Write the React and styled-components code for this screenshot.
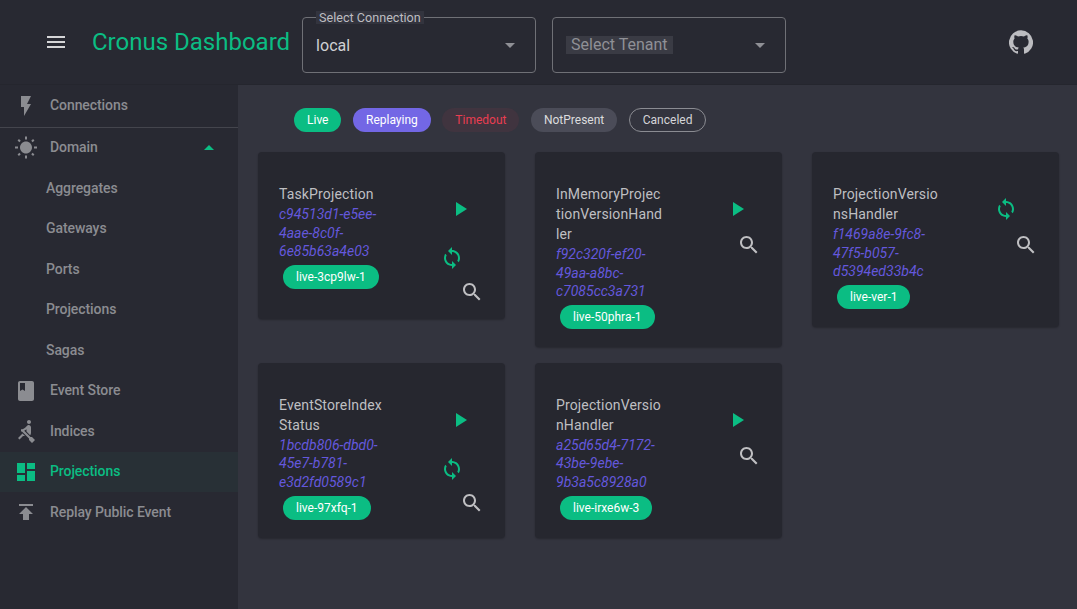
import React from 'react';
import styled, { createGlobalStyle } from 'styled-components';

const paths = {
    menu: 'M3 18h18v-2H3v2zm0-5h18v-2H3v2zm0-7v2h18V6H3z',
    flash: 'M7 2v11h3v9l7-12h-4l4-8z',
    sun: 'M6.76 4.84l-1.8-1.79-1.41 1.41 1.79 1.79 1.42-1.41zM4 10.5H1v2h3v-2zm9-9.95h-2V3.5h2V.55zm7.45 3.91l-1.41-1.41-1.79 1.79 1.41 1.41 1.79-1.79zm-3.21 13.7l1.79 1.8 1.41-1.41-1.8-1.79-1.4 1.4zM20 10.5v2h3v-2h-3zm-8-5c-3.31 0-6 2.69-6 6s2.69 6 6 6 6-2.69 6-6-2.69-6-6-6zm-1 16.95h2V19.5h-2v2.95zm-7.45-3.91l1.41 1.41 1.79-1.8-1.41-1.41-1.79 1.8z',
    book: 'M18 2H6c-1.1 0-2 .9-2 2v16c0 1.1.9 2 2 2h12c1.1 0 2-.9 2-2V4c0-1.1-.9-2-2-2zM6 4h5v8l-2.5-1.5L6 12V4z',
    rowing: 'M8.5 14.5L4 19l1.5 1.5L9 17h2l-2.5-2.5zM15 1c-1.1 0-2 .9-2 2s.9 2 2 2 2-.9 2-2-.9-2-2-2zm6 20.01L18 24l-2.99-3.01V19.5l-7.1-7.09c-.31.05-.61.07-.91.07v-2.16c1.66.03 3.61-.87 4.67-2.04l1.4-1.55c.19-.21.43-.38.69-.5.29-.14.62-.23.96-.23h.03C15.99 6.01 17 7.02 17 8.26v5.75c0 .84-.35 1.61-.92 2.16l-3.58-3.58v-2.27c-.63.52-1.43 1.02-2.3 1.39L16.5 18H18l3 3.01z',
    dashboard: 'M3 13h8V3H3v10zm0 8h8v-6H3v6zm10 0h8V11h-8v10zm0-18v6h8V3h-8z',
    publish: 'M5 4v2h14V4H5zm0 10h4v6h6v-6h4l-7-7-7 7z',
    play: 'M8 5v14l11-7z',
    sync: 'M12 4V1L8 5l4 4V6c3.31 0 6 2.69 6 6 0 1.01-.25 1.97-.7 2.8l1.46 1.46C19.54 15.03 20 13.57 20 12c0-4.42-3.58-8-8-8zm0 14c-3.31 0-6-2.69-6-6 0-1.01.25-1.97.7-2.8L5.24 7.74C4.46 8.97 4 10.43 4 12c0 4.42 3.58 8 8 8v3l4-4-4-4v3z',
    search: 'M15.5 14h-.79l-.28-.27C15.41 12.59 16 11.11 16 9.5 16 5.91 13.09 3 9.5 3S3 5.91 3 9.5 5.91 16 9.5 16c1.61 0 3.09-.59 4.23-1.57l.27.28v.79l5 4.99L20.49 19l-4.99-5zm-6 0C7.01 14 5 11.99 5 9.5S7.01 5 9.5 5 14 7.01 14 9.5 11.99 14 9.5 14z',
    dropDown: 'M7 10l5 5 5-5z',
    dropUp: 'M7 14l5-5 5 5z',
    github: 'M12 .3a12 12 0 0 0-3.8 23.4c.6.1.8-.3.8-.6v-2c-3.3.7-4-1.6-4-1.6-.6-1.4-1.4-1.8-1.4-1.8-1-.7.1-.7.1-.7 1.2 0 1.9 1.2 1.9 1.2 1 1.8 2.8 1.3 3.5 1 0-.8.4-1.3.7-1.6-2.7-.3-5.5-1.3-5.5-6 0-1.2.5-2.3 1.3-3.1-.2-.4-.6-1.6 0-3.2 0 0 1-.3 3.4 1.2a11.5 11.5 0 0 1 6 0c2.3-1.5 3.3-1.2 3.3-1.2.6 1.6.2 2.8 0 3.2.9.8 1.3 1.9 1.3 3.2 0 4.6-2.8 5.6-5.5 5.9.5.4.9 1 .9 2.2v3.3c0 .3.1.7.8.6A12 12 0 0 0 12 .3',
};

const Icon = ({ name, size = 24, color = 'currentColor' }) => (
    <svg width={size} height={size} viewBox="0 0 24 24" fill={color} style={{ display: 'block', flexShrink: 0 }}>
        <path d={paths[name]} />
    </svg>
);

const navTop = [{ icon: 'flash', label: 'Connections' }];
const domainItems = ['Aggregates', 'Gateways', 'Ports', 'Projections', 'Sagas'];
const navBottom = [
    { icon: 'book', label: 'Event Store' },
    { icon: 'rowing', label: 'Indices' },
    { icon: 'dashboard', label: 'Projections', active: true },
    { icon: 'publish', label: 'Replay Public Event' },
];

const statuses = [
    { label: 'Live', kind: 'live' },
    { label: 'Replaying', kind: 'replaying' },
    { label: 'Timedout', kind: 'timedout' },
    { label: 'NotPresent', kind: 'notPresent' },
    { label: 'Canceled', kind: 'canceled' },
];

const cards = [
    { name: 'TaskProjection', id: 'c94513d1-e5ee-4aae-8c0f-6e85b63a4e03', chip: 'live-3cp9lw-1', play: true, sync: true },
    { name: 'InMemoryProjectionVersionHandler', id: 'f92c320f-ef20-49aa-a8bc-c7085cc3a731', chip: 'live-50phra-1', play: true },
    { name: 'ProjectionVersionsHandler', id: 'f1469a8e-9fc8-47f5-b057-d5394ed33b4c', chip: 'live-ver-1', sync: true },
    { name: 'EventStoreIndexStatus', id: '1bcdb806-dbd0-45e7-b781-e3d2fd0589c1', chip: 'live-97xfq-1', play: true, sync: true },
    { name: 'ProjectionVersionHandler', id: 'a25d65d4-7172-43be-9ebe-9b3a5c8928a0', chip: 'live-irxe6w-3', play: true },
];

const App = () => {
    return (
        <Page>
            <GlobalStyle />
            <Header>
                <MenuButton><Icon name="menu" color="#d5d5d7" /></MenuButton>
                <Title>Cronus Dashboard</Title>
                <SelectBox>
                    <SelectLabel>Select Connection</SelectLabel>
                    <SelectValue>local</SelectValue>
                    <Icon name="dropDown" color="#8f9095" />
                </SelectBox>
                <SelectBox>
                    <SelectPlaceholder>Select Tenant</SelectPlaceholder>
                    <Icon name="dropDown" color="#8f9095" />
                </SelectBox>
                <GithubLink><Icon name="github" color="#bcbcc0" /></GithubLink>
            </Header>
            <Body>
                <Sidebar>
                    {navTop.map((item) => (
                        <NavItem key={item.label} $divider>
                            <Icon name={item.icon} />
                            <NavText>{item.label}</NavText>
                        </NavItem>
                    ))}
                    <NavItem>
                        <Icon name="sun" />
                        <NavText>Domain</NavText>
                        <Caret><Icon name="dropUp" color="#0bbd83" /></Caret>
                    </NavItem>
                    {domainItems.map((label) => (
                        <SubItem key={label}>{label}</SubItem>
                    ))}
                    {navBottom.map((item) => (
                        <NavItem key={item.label} $active={item.active}>
                            <Icon name={item.icon} />
                            <NavText>{item.label}</NavText>
                        </NavItem>
                    ))}
                </Sidebar>
                <Main>
                    <StatusRow>
                        {statuses.map((s) => (
                            <StatusChip key={s.label} $kind={s.kind}>{s.label}</StatusChip>
                        ))}
                    </StatusRow>
                    <CardGrid>
                        {cards.map((card) => (
                            <Card key={card.id}>
                                <CardText>
                                    <CardName>{card.name}</CardName>
                                    <CardId>{card.id}</CardId>
                                    <LiveChip>{card.chip}</LiveChip>
                                </CardText>
                                <CardActions>
                                    {card.play && <Action $x={8}><Icon name="play" color="#0bbd83" /></Action>}
                                    {card.sync && <Action $x={0} $top={card.play ? 25 : 0}><Icon name="sync" color="#0bbd83" /></Action>}
                                    <Action $x={20} $top={card.play && card.sync ? 10 : 12}><Icon name="search" color="#bfbfc2" /></Action>
                                </CardActions>
                            </Card>
                        ))}
                    </CardGrid>
                </Main>
            </Body>
        </Page>
    );
};

export default App;

const GlobalStyle = createGlobalStyle`
    html, body {
        margin:0;
        padding:0;
        height:100%;
        overflow:hidden;
        background:#33343e;
    }
    #root {
        height:100%;
    }
    * {
        box-sizing:border-box;
    }
`

const Page = styled.div`
    display:flex;
    flex-direction:column;
    width:100%;
    height:609px;
    font-family:Roboto, "Liberation Sans", sans-serif;
    background:#33343e;
`

const Header = styled.header`
    display:flex;
    align-items:center;
    flex-shrink:0;
    height:85px;
    padding-left:44px;
    background:#282932;
    border-bottom:1px solid #25262e;
`

const MenuButton = styled.div`
    width:24px;
    height:24px;
    margin-right:24px;
`

const Title = styled.h1`
    margin:0 12px 0 0;
    font-size:24px;
    font-weight:400;
    line-height:32px;
    color:#0bbd83;
    white-space:nowrap;
`

const SelectBox = styled.div`
    position:relative;
    display:flex;
    align-items:center;
    justify-content:space-between;
    width:234px;
    height:56px;
    margin:6px 16px 0 0;
    padding:0 13px 0 13px;
    border:1px solid #6f7076;
    border-radius:4px;
`

const SelectLabel = styled.span`
    position:absolute;
    top:-7px;
    left:13px;
    padding:0 3px;
    font-size:12.6px;
    line-height:13px;
    color:#bdbdc1;
    background:#33343e;
`

const SelectValue = styled.span`
    font-size:16px;
    font-weight:400;
    color:#d0d0d3;
`

const SelectPlaceholder = styled.span`
    padding:0 5px;
    font-size:16px;
    line-height:18px;
    color:#8f9096;
    background:#3a3b44;
`

const GithubLink = styled.div`
    margin-left:auto;
    margin-right:44px;
`

const Body = styled.div`
    display:flex;
    flex:1;
    min-height:0;
`

const Sidebar = styled.nav`
    flex-shrink:0;
    width:238px;
    background:#282932;
`

const NavItem = styled.div`
    display:flex;
    align-items:center;
    height:${(p) => (p.$divider ? '42.5px' : '40.5px')};
    padding-left:14px;
    color:${(p) => (p.$active ? '#0bbd83' : '#8b8c91')};
    background:${(p) => (p.$active ? '#283036' : 'transparent')};
    border-bottom:${(p) => (p.$divider ? '1px solid #44454d' : 'none')};
`

const NavText = styled.span`
    margin-left:12px;
    padding-bottom:1.5px;
    font-size:14px;
    font-weight:500;
    letter-spacing:-0.08px;
`

const Caret = styled.span`
    margin-left:auto;
    margin-right:17px;
`

const SubItem = styled.div`
    display:flex;
    align-items:center;
    height:40.5px;
    padding:0 0 1.5px 46px;
    font-size:14px;
    font-weight:500;
    letter-spacing:-0.08px;
    color:#8b8c91;
`

const Main = styled.main`
    flex:1;
    min-width:0;
    padding:23px 18px 0 20px;
`

const statusStyles = {
    live: 'background:#0bbd83; color:#ffffff;',
    replaying: 'background:#7367e5; color:#ffffff;',
    timedout: 'background:#40343f; color:#ea3d51;',
    notPresent: 'background:#4b4c58; color:#dcdcde;',
    canceled: 'background:transparent; color:#d5d5d8; border:1px solid #8b8c92;',
};

const StatusRow = styled.div`
    display:flex;
    gap:11.5px;
    padding-left:36px;
    margin-bottom:20px;
`

const StatusChip = styled.span`
    display:inline-flex;
    align-items:center;
    justify-content:center;
    height:24px;
    padding:0 13px;
    border-radius:12px;
    font-size:12px;
    white-space:nowrap;
    ${(p) => statusStyles[p.$kind]}
`

const CardGrid = styled.div`
    display:grid;
    grid-template-columns:repeat(3, 247px);
    column-gap:30px;
    row-gap:16px;
    align-items:start;
`

const Card = styled.article`
    display:flex;
    justify-content:space-between;
    padding:32px 21px 18px;
    background:#26272f;
    border-radius:4px;
    box-shadow:0 1px 2px rgba(0, 0, 0, 0.25);
`

const CardText = styled.div`
    display:flex;
    flex-direction:column;
    align-items:flex-start;
    width:107px;
`

const CardName = styled.div`
    width:100%;
    font-size:14px;
    line-height:20px;
    letter-spacing:0.01em;
    color:#bfbfc2;
    word-break:break-all;
`

const CardId = styled.div`
    padding-top:1px;
    font-size:14px;
    font-style:italic;
    line-height:18.6px;
    color:#6458dc;
`

const LiveChip = styled.span`
    display:inline-flex;
    align-items:center;
    height:24px;
    margin:4px 0 0 4px;
    padding:0 13px;
    border-radius:12px;
    font-size:12px;
    white-space:nowrap;
    color:#ffffff;
    background:#0bbd83;
`

const CardActions = styled.div`
    display:flex;
    flex-direction:column;
    align-items:flex-start;
    width:44px;
    padding-top:13px;
    margin-bottom:-3px;
`

const Action = styled.div`
    margin-left:${(p) => p.$x}px;
    margin-top:${(p) => p.$top || 0}px;
`
